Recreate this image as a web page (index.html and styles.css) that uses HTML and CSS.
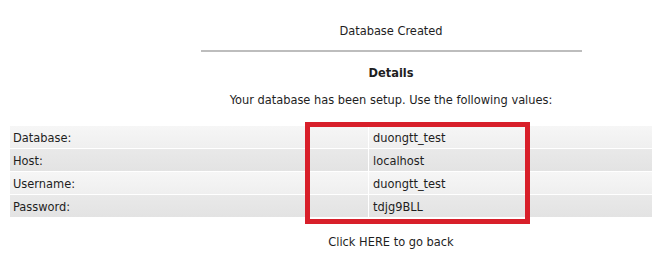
FILE: index.html
```html
<!DOCTYPE html>
<html>
  <head>
    <meta charset="UTF-8" />
    <title>Database Created</title>
    <link rel="stylesheet" href="styles.css">
  </head>
  <body>
    <div class="page">
      <div class="title">Database Created</div>
      <hr />
      <h3>Details</h3>
      <p class="intro">Your database has been setup. Use the following values:</p>

      <div class="details">
        <table>
          <tr class="odd">
            <td class="label">Database:</td>
            <td>duongtt_test</td>
          </tr>
          <tr class="even">
            <td class="label">Host:</td>
            <td>localhost</td>
          </tr>
          <tr class="odd">
            <td class="label">Username:</td>
            <td>duongtt_test</td>
          </tr>
          <tr class="even">
            <td class="label">Password:</td>
            <td>tdjg9BLL</td>
          </tr>
        </table>
        <div class="highlight"></div>
      </div>

      <p class="back"><a href="#">Click HERE to go back</a></p>
    </div>
  </body>
</html>
```

FILE: styles.css
```css
html {
  overflow: hidden;
}

body {
  margin: 0;
  font-family: "DejaVu Sans Condensed", "DejaVu Sans", sans-serif;
  font-size: 12.7px;
  color: #1e1e1e;
  background-color: white;
}

.page {
  width: 762px;
  margin-left: 10px;
  text-align: center;
}

.title {
  padding-top: 23px;
  line-height: 16px;
}

hr {
  width: 50%;
  height: 2px;
  margin: 11px auto 0;
  border: 0;
  background-color: #bdbdbd;
}

h3 {
  margin: 13px 0 0;
  font-size: 12.7px;
  line-height: 16px;
}

.intro {
  margin: 11px 0 0;
  line-height: 16px;
}

.details {
  position: relative;
  margin-top: 17px;
}

table {
  width: 100%;
  border-collapse: separate;
  border-spacing: 0 1px;
  text-align: left;
}

td {
  height: 22px;
  padding: 0 4px;
}

td.label {
  width: 351px;
  border-right: 1px solid white;
  padding-left: 3px;
}

tr.odd td {
  background: linear-gradient(#f6f6f6, #efefef);
}

tr.even td {
  background: linear-gradient(#e9e9e9, #e3e3e3);
}

.highlight {
  position: absolute;
  left: 295px;
  top: -3px;
  width: 215px;
  height: 92px;
  border: 5px solid #d81f2a;
}

.back {
  margin: 16px 0 0;
  line-height: 16px;
}

a {
  color: #1e1e1e;
  text-decoration: none;
}
```
